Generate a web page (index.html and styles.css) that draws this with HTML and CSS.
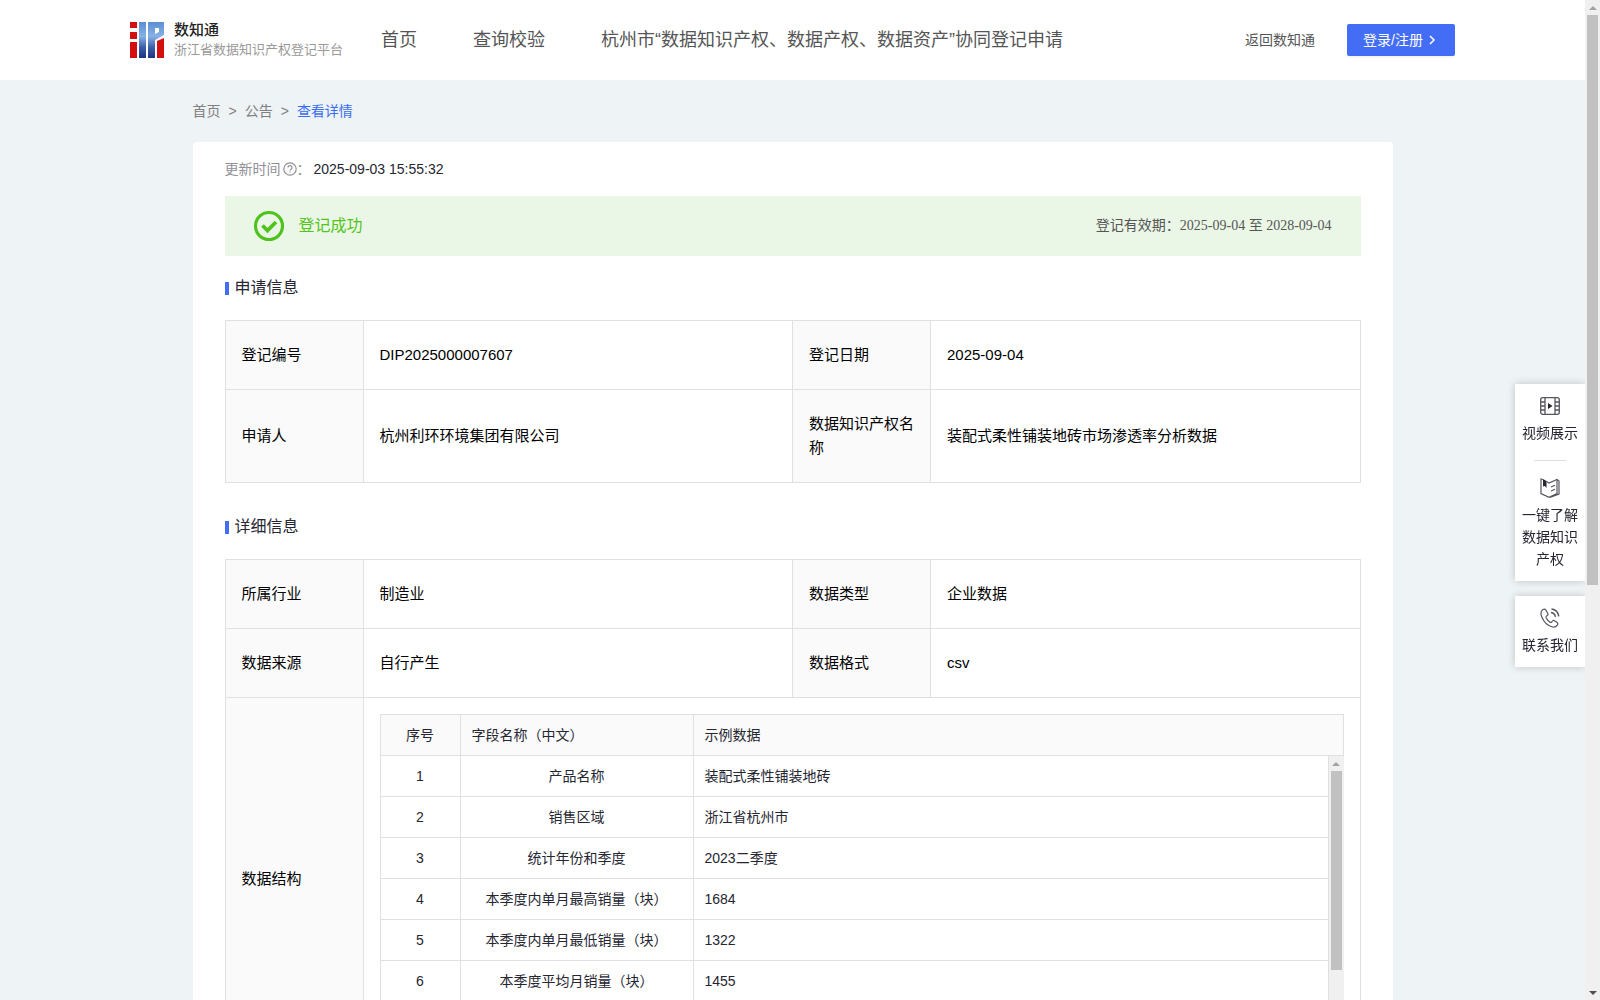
FILE: index.html
```html
<!DOCTYPE html>
<html lang="zh-CN">
<head>
  <meta charset="UTF-8">
  <meta name="viewport" content="width=device-width, initial-scale=1.0">
  <title>数知通 - 查看详情</title>
  <link rel="stylesheet" href="styles.css">
</head>
<body>
  <div class="view">
    <header class="header">
      <a href="#" class="logo">
        <svg width="34" height="36" viewBox="0 0 34 36">
          <defs>
            <linearGradient id="blue" x1="0" y1="0" x2="0" y2="36" gradientUnits="userSpaceOnUse">
              <stop offset="0" stop-color="#5b8fd2"/>
              <stop offset="0.4" stop-color="#86b1e6"/>
              <stop offset="0.7" stop-color="#3c5fa8"/>
              <stop offset="1" stop-color="#1f3384"/>
            </linearGradient>
          </defs>
          <path fill="#d40f0f" d="M0 0h7v6H0zM0 10h7v7H0zM0 20h7v16H0zM27 19l7-3v20h-7z"/>
          <path fill="url(#blue)" d="M9 0h7v36H9zM18 0h16v13l-9 5v18h-7zM25 6v6l4-2V6z" fill-rule="evenodd"/>
        </svg>
        <span class="logo-text">
          <strong>数知通</strong>
          <small>浙江省数据知识产权登记平台</small>
        </span>
      </a>
      <nav class="nav">
        <a href="#">首页</a>
        <a href="#">查询校验</a>
        <a href="#">杭州市“数据知识产权、数据产权、数据资产”协同登记申请</a>
      </nav>
      <a href="#" class="back">返回数知通</a>
      <button type="button" class="login">登录/注册
        <svg width="8" height="10" viewBox="0 0 8 10"><path d="M2 1l4 4-4 4" fill="none" stroke="#fff" stroke-width="1.5"/></svg>
      </button>
    </header>

    <main class="main">
      <div class="breadcrumb">
        <a href="#">首页</a><span>&gt;</span><a href="#">公告</a><span>&gt;</span><a href="#" class="current">查看详情</a>
      </div>

      <div class="card">
        <div class="update">
          <span class="update-label">更新时间</span>
          <svg width="14" height="14" viewBox="0 0 14 14" fill="none" stroke="#909096">
            <circle cx="7" cy="7" r="6.2" stroke-width="1.2"/>
            <path d="M5 5.600a2 1.900 0 1 1 3 1.600c-.7.4-1 .6-1 1.300M7 9.400v1.200" stroke-width="1.2"/>
          </svg>
          <span class="update-label colon">：</span>
          <span>2025-09-03 15:55:32</span>
        </div>

        <div class="status">
          <svg width="32" height="32" viewBox="0 0 32 32" fill="none" stroke="#4ec31d">
            <circle cx="16" cy="16" r="13.5" stroke-width="3.2"/>
            <path d="M9.500 15.500l5 5 8.500-8.500" stroke-width="3.800"/>
          </svg>
          <span class="status-text">登记成功</span>
          <span class="period">登记有效期：2025-09-04 至 2028-09-04</span>
        </div>

        <h2 class="title">申请信息</h2>
        <table class="info">
          <colgroup><col class="col-label"><col><col class="col-label"><col></colgroup>
          <tr>
            <th scope="row">登记编号</th>
            <td>DIP2025000007607</td>
            <th scope="row">登记日期</th>
            <td>2025-09-04</td>
          </tr>
          <tr>
            <th scope="row">申请人</th>
            <td>杭州利环环境集团有限公司</td>
            <th scope="row">数据知识产权名称</th>
            <td>装配式柔性铺装地砖市场渗透率分析数据</td>
          </tr>
        </table>

        <h2 class="title">详细信息</h2>
        <table class="info">
          <colgroup><col class="col-label"><col><col class="col-label"><col></colgroup>
          <tr>
            <th scope="row">所属行业</th>
            <td>制造业</td>
            <th scope="row">数据类型</th>
            <td>企业数据</td>
          </tr>
          <tr>
            <th scope="row">数据来源</th>
            <td>自行产生</td>
            <th scope="row">数据格式</th>
            <td>csv</td>
          </tr>
          <tr>
            <th scope="row">数据结构</th>
            <td colspan="3" class="nested">
              <table class="fields">
                <colgroup><col class="col-no"><col class="col-name"><col></colgroup>
                <tr><th scope="col">序号</th><th scope="col">字段名称（中文）</th><th scope="col">示例数据</th></tr>
              </table>
              <div class="fields-scroll">
                <table class="fields fields-body">
                  <colgroup><col class="col-no"><col class="col-name"><col></colgroup>
                  <tr><td>1</td><td>产品名称</td><td>装配式柔性铺装地砖</td></tr>
                  <tr><td>2</td><td>销售区域</td><td>浙江省杭州市</td></tr>
                  <tr><td>3</td><td>统计年份和季度</td><td>2023二季度</td></tr>
                  <tr><td>4</td><td>本季度内单月最高销量（块）</td><td>1684</td></tr>
                  <tr><td>5</td><td>本季度内单月最低销量（块）</td><td>1322</td></tr>
                  <tr><td>6</td><td>本季度平均月销量（块）</td><td>1455</td></tr>
                </table>
                <div class="scrollbar" aria-hidden="true">
                  <span class="arrow arrow-up"></span>
                  <span class="thumb"></span>
                  <span class="arrow arrow-down"></span>
                </div>
              </div>
            </td>
          </tr>
        </table>
      </div>
    </main>
  </div>

  <div class="scrollbar" aria-hidden="true">
    <span class="arrow arrow-up"></span>
    <span class="thumb"></span>
    <span class="arrow arrow-down"></span>
  </div>

  <aside class="side">
    <div class="side-box">
      <a href="#">
        <svg width="20" height="20" viewBox="0 0 20 20" fill="none" stroke="#555660" stroke-width="1.3">
          <rect x="0.700" y="1.700" width="18.600" height="16.600" rx="2"/>
          <path d="M5 2v16M15 2v16M1 6h4M1 10h4M1 14h4M15 6h4M15 10h4M15 14h4"/>
          <path d="M8 7l4.500 3L8 13z" fill="#252631" stroke="none"/>
        </svg>
        视频展示
      </a>
      <hr>
      <a href="#">
        <svg width="20" height="20" viewBox="0 0 20 20" fill="none" stroke="#555660" stroke-width="1.2">
          <path d="M3 1.500L1 1v14.500l8 3.800 8-3.800V2.500M6.500 3.500L9 5l8-3.500 2 1.500v13l-8.500 3.300"/>
          <path d="M11 9l4-1.800M11 13l4-1.800"/>
          <path d="M3 1l3.500 2v7L4.800 8 3 8.500z" fill="#252631" stroke="none"/>
        </svg>
        一键了解数据知识产权
      </a>
    </div>
    <div class="side-box">
      <a href="#">
        <svg width="20" height="20" viewBox="0 0 20 20" fill="none" stroke="#555660" stroke-width="1.2">
          <path d="M3 1.500C.5 3 .5 6 2 9.500c2 4.500 6 8.500 10.500 9.500 2 .4 3.800-.4 5-2.200.6-1 .4-1.700-.4-2.300l-2.600-1.800c-.8-.5-1.500-.4-2 .3l-.8 1c-.5.500-1 .6-1.600.2-1.900-1.200-3.200-2.800-4-4.700-.2-.6-.1-1 .4-1.400l1-.8c.6-.5.7-1.100.300-1.800L6 2.200C5.300 1 4.200.8 3 1.500z"/>
          <path d="M11 4.500c2.300.3 4 1.800 4.500 4.300M11.500 1c4 .5 6.700 3.200 7.300 7.300" stroke-width="1.5"/>
        </svg>
        联系我们
      </a>
    </div>
  </aside>
</body>
</html>
```

FILE: styles.css
```css
* { box-sizing: border-box; }

body {
  display: flex;
  height: 100vh;
  margin: 0;
  background: #eef3f6;
  color: #252631;
  font-family: "Liberation Sans", "Noto Sans CJK SC", sans-serif;
  font-size: 14px;
  line-height: 22px;
}

a { color: inherit; text-decoration: none; }
svg { flex: none; display: block; }

.view { flex: 1; min-width: 0; overflow-y: auto; scrollbar-width: none; }

/* scrollbars */
.scrollbar {
  display: flex;
  flex: none;
  flex-direction: column;
  width: 15px;
  background: #f0f0f0;
}
.arrow { display: flex; flex: none; align-items: center; justify-content: center; height: 15px; }
.arrow::before { content: ""; border: solid transparent; border-width: 0 4px; }
.arrow-up::before { border-bottom: 4px solid #a3a3a3; }
.arrow-down { margin-top: auto; }
.arrow-down::before { border-top: 4px solid #505050; }
.thumb { height: 57%; margin: 0 2px; background: #c1c1c1; }

/* header */
.header {
  display: flex;
  align-items: center;
  height: 80px;
  padding: 0 130px;
  background: #fff;
  color: #555;
}
.logo { display: flex; align-items: center; gap: 10px; }
.logo-text { display: flex; flex-direction: column; white-space: nowrap; }
.logo-text strong { color: #222; font-size: 15px; font-weight: 500; line-height: 20px; }
.logo-text small { color: #999; font-size: 13px; line-height: 20px; }
.nav { display: flex; flex: 1; gap: 56px; margin-left: 38px; font-size: 18px; white-space: nowrap; }
.back { margin-right: 32px; }
.login {
  display: flex;
  align-items: center;
  gap: 5px;
  width: 108px;
  height: 32px;
  padding: 0 16px;
  border: none;
  border-radius: 2px;
  background: #446df6;
  box-shadow: 0 2px 0 rgba(0, 0, 0, 0.04);
  color: #fff;
  font: inherit;
  white-space: nowrap;
}

/* page */
.main { max-width: 1200px; margin: 0 auto; }
.breadcrumb { display: flex; gap: 8px; padding: 20px 0; color: #808080; }
.breadcrumb .current { color: #3b6cf5; }
.card { padding: 16px 32px 32px; border-radius: 4px; background: #fff; }

.update { display: flex; align-items: center; }
.update-label { color: #909096; }
.update svg { margin-left: 2px; }
.colon { width: 17px; }

.status {
  display: flex;
  align-items: center;
  height: 60px;
  margin-top: 16px;
  padding: 0 29px 0 28px;
  background: #ebf7e6;
}
.status-text { margin-left: 14px; color: #52c41a; font-size: 16px; }
.period {
  margin-left: auto;
  color: #555;
  font-family: "Liberation Serif", "Noto Sans CJK SC", serif;
}

.title {
  display: flex;
  align-items: center;
  gap: 6px;
  margin: 20px 0;
  font-size: 16px;
  font-weight: 400;
  line-height: 24px;
}
.title::before { content: ""; width: 4px; height: 13px; background: #446df6; }

/* info tables */
table { width: 100%; border-collapse: collapse; table-layout: fixed; }
th { background: #fafafa; font-weight: 400; text-align: left; }
.info { color: #000; font-size: 15px; line-height: 24px; }
.info + .title { margin-top: 32px; }
.info th, .info td { padding: 22px 16px; border: 1px solid #e0e0e0; }
.col-label { width: 138px; }
.info .nested { padding: 16px; }

.info .fields { color: #252631; font-size: 14px; line-height: 22px; }
.info .fields th, .info .fields td { height: 41px; padding: 9px 11px; }
.fields th:first-child, .fields td:first-child, .fields-body td:nth-child(2) { text-align: center; }
.col-no { width: 80px; }
.col-name { width: 233px; }
.fields-scroll { display: flex; height: 288px; overflow: hidden; }
.fields-scroll .thumb { height: 69%; }
.info .fields-body { flex: 1; width: auto; align-self: flex-start; }
.info .fields-body tr:first-child td { height: 40px; border-top: none; }

/* floating entries */
.side { position: fixed; top: 384px; right: 15px; width: 70px; }
.side-box {
  margin-bottom: 15px;
  padding: 12px 7px 11px;
  background: #fff;
  box-shadow: 0 0 8px rgba(0, 0, 0, 0.2);
  clip-path: inset(-8px 0 -8px -8px);
  text-align: center;
}
.side-box svg { margin: 0 auto 6px; }
.side-box a { display: block; }
.side-box hr { width: 32px; height: 1px; margin: 16px auto 17px; border: none; background: #ddd; }
```
